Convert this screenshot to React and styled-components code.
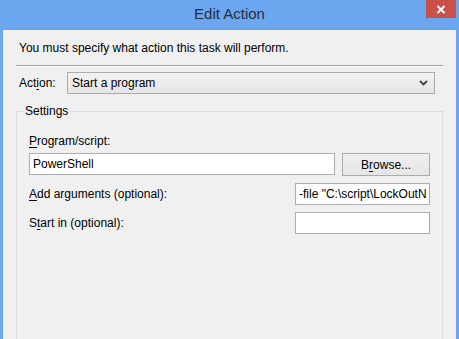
import React from "react";
import styled, { createGlobalStyle } from "styled-components";

const GlobalStyle = createGlobalStyle`
  body {
    margin: 0;
    font-family: "Segoe UI", "Liberation Sans", Arial, sans-serif;
    font-size: 12px;
    color: #000;
  }
`;

const Window = styled.div`
  position: relative;
  width: 459px;
  height: 339px;
  overflow: hidden;
  display: flex;
  flex-direction: column;
  background: #6ba6ee;
  padding: 0 3px;
  box-sizing: border-box;
`;

const TitleBar = styled.div`
  height: 30px;
  flex-shrink: 0;
  display: flex;
  align-items: center;
  justify-content: center;
  font-size: 15px;
  color: #232f3e;
  padding-bottom: 3px;
  box-sizing: border-box;
`;

const CloseButton = styled.div`
  position: absolute;
  top: 0;
  right: 3px;
  width: 30px;
  height: 18px;
  background: #c9504b;
  display: flex;
  align-items: center;
  justify-content: center;
`;

// 회색 본문 영역
const Body = styled.div`
  flex: 1;
  background: #f0f0f0;
  padding: 11px 13px 0 13px;
  display: flex;
  flex-direction: column;
`;

const Intro = styled.div`
  line-height: 15px;
  padding-left: 3px;
`;

const Separator = styled.div`
  margin-top: 9px;
  height: 1px;
  background: #a0a0a0;
  border-bottom: 1px solid #ffffff;
`;

const ActionRow = styled.div`
  display: flex;
  align-items: center;
  margin-top: 5px;
  padding-left: 3px;
`;

const ActionLabel = styled.span`
  width: 48px;
  line-height: 15px;
`;

const Combo = styled.div`
  flex: 0 0 368px;
  height: 22px;
  box-sizing: border-box;
  border: 1px solid #acacac;
  background: linear-gradient(#f2f2f2, #e5e5e5);
  display: flex;
  align-items: center;
  justify-content: space-between;
  padding: 0 6px 0 4px;
  line-height: 15px;
`;

const Group = styled.fieldset`
  margin: 10px 0 0 0;
  flex: 1;
  border: 1px solid #dcdcdc;
  border-bottom: none;
  padding: 15px 0 0 12px;
  min-width: 0;
`;

const Legend = styled.legend`
  margin-left: -6px;
  padding: 0 2px;
  line-height: 15px;
`;

const Label = styled.div`
  line-height: 15px;
`;

const FieldRow = styled.div`
  display: flex;
  align-items: center;
  justify-content: ${({ $split }) => ($split ? "space-between" : "flex-start")};
  gap: 7px;
  margin-top: ${({ $top }) => $top}px;
  padding-right: 12px;
`;

const Input = styled.div`
  width: ${({ $width }) => $width}px;
  height: 22px;
  box-sizing: border-box;
  border: 1px solid #abadb3;
  background: #ffffff;
  padding: 0 3px;
  display: flex;
  align-items: center;
  white-space: nowrap;
  overflow: hidden;
  line-height: 15px;
`;

const Button = styled.div`
  width: 88px;
  height: 23px;
  box-sizing: border-box;
  border: 1px solid #acacac;
  background: linear-gradient(#f0f0f0, #e5e5e5);
  display: flex;
  align-items: center;
  justify-content: center;
  margin-top: 1px;
`;

const Key = styled.span`
  text-decoration: underline;
  text-underline-offset: 2px;
`;

const Chevron = () => (
  <svg width="9" height="6" viewBox="0 0 9 6">
    <path d="M1 1 L4.5 4.5 L8 1" fill="none" stroke="#404040" strokeWidth="1.8" />
  </svg>
);

const CloseIcon = () => (
  <svg width="10" height="9" viewBox="0 0 10 9">
    <path d="M1.5 1 L8.5 8 M8.5 1 L1.5 8" stroke="#ffffff" strokeWidth="2" />
  </svg>
);

const App = () => (
  <>
    <GlobalStyle />
    <Window>
      <TitleBar>Edit Action</TitleBar>
      <CloseButton>
        <CloseIcon />
      </CloseButton>
      <Body>
        <Intro>You must specify what action this task will perform.</Intro>
        <Separator />
        <ActionRow>
          <ActionLabel>
            Act<Key>i</Key>on:
          </ActionLabel>
          <Combo>
            <span>Start a program</span>
            <Chevron />
          </Combo>
        </ActionRow>
        <Group>
          <Legend>Settings</Legend>
          <Label>
            <Key>P</Key>rogram/script:
          </Label>
          <FieldRow $top={3}>
            <Input $width={307}>PowerShell</Input>
            <Button>
              B<Key>r</Key>owse...
            </Button>
          </FieldRow>
          <FieldRow $split $top={7}>
            <Label>
              <Key>A</Key>dd arguments (optional):
            </Label>
            <Input $width={135}>-file "C:\script\LockOutN</Input>
          </FieldRow>
          <FieldRow $split $top={7}>
            <Label>
              S<Key>t</Key>art in (optional):
            </Label>
            <Input $width={135} />
          </FieldRow>
        </Group>
      </Body>
    </Window>
  </>
);

export default App;
